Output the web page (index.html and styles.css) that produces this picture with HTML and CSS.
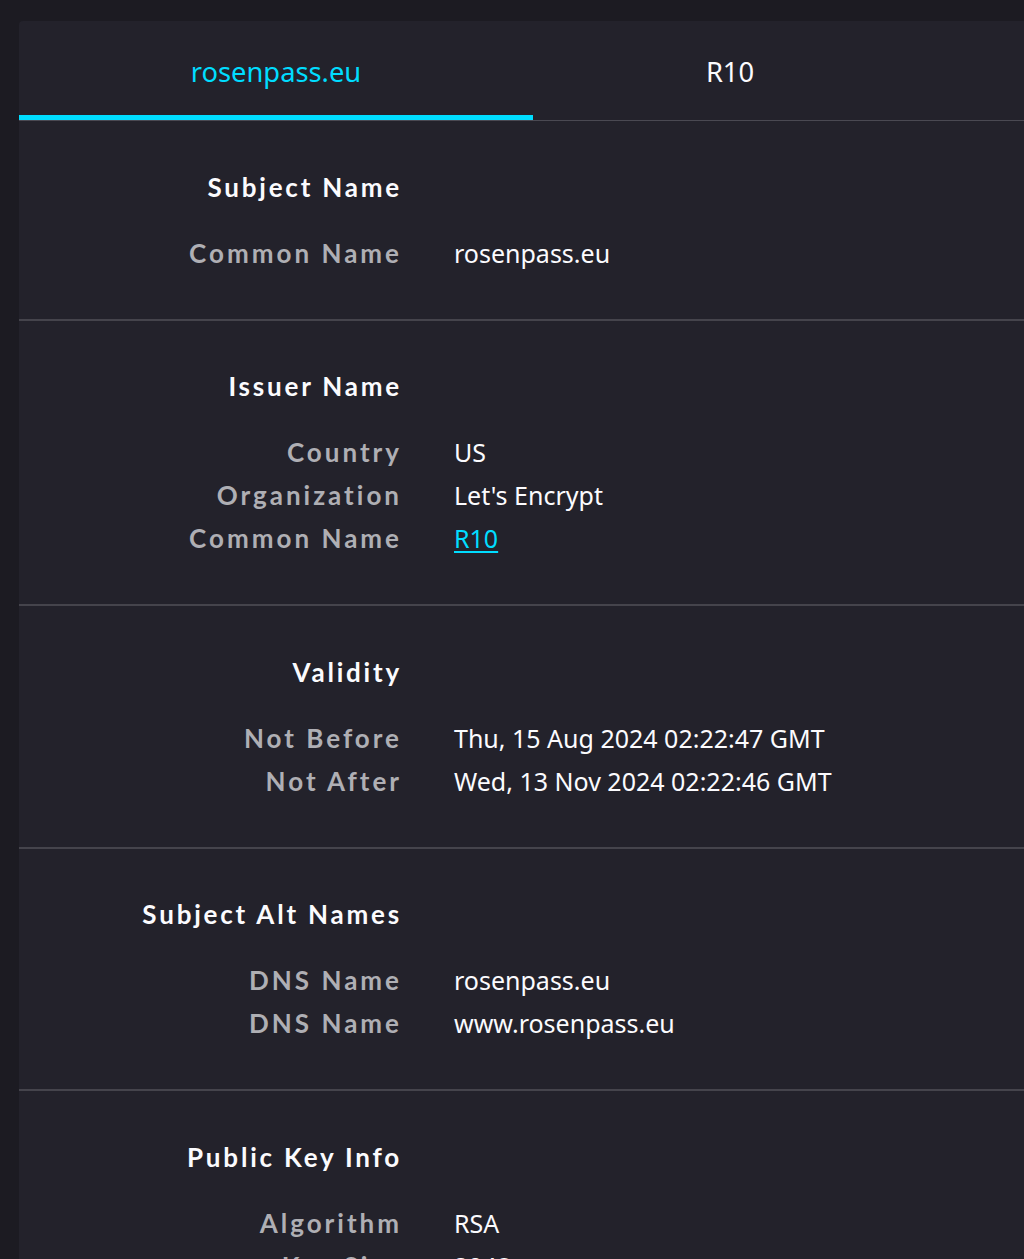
FILE: index.html
```html
<!DOCTYPE html>
<html lang="en">
<head>
<meta charset="utf-8">
<title>Certificate</title>
<link rel="stylesheet" href="styles.css">
</head>
<body>
<div class="card">
  <div class="tabs">
    <div class="tab tab-first active">rosenpass.eu</div>
    <div class="tab tab-second">R10</div>
  </div>

  <section class="section">
    <div class="row heading-row"><div class="heading">Subject Name</div></div>
    <div class="rows">
      <div class="row"><div class="label">Common Name</div><div class="value">rosenpass.eu</div></div>
    </div>
  </section>

  <section class="section">
    <div class="row heading-row"><div class="heading">Issuer Name</div></div>
    <div class="rows">
      <div class="row"><div class="label">Country</div><div class="value">US</div></div>
      <div class="row"><div class="label">Organization</div><div class="value">Let's Encrypt</div></div>
      <div class="row"><div class="label">Common Name</div><div class="value"><a class="link" href="#">R10</a></div></div>
    </div>
  </section>

  <section class="section">
    <div class="row heading-row"><div class="heading">Validity</div></div>
    <div class="rows">
      <div class="row"><div class="label">Not Before</div><div class="value date">Thu, 15 Aug 2024 02:22:47 GMT</div></div>
      <div class="row"><div class="label">Not After</div><div class="value date">Wed, 13 Nov 2024 02:22:46 GMT</div></div>
    </div>
  </section>

  <section class="section">
    <div class="row heading-row"><div class="heading">Subject Alt Names</div></div>
    <div class="rows">
      <div class="row"><div class="label">DNS Name</div><div class="value">rosenpass.eu</div></div>
      <div class="row"><div class="label">DNS Name</div><div class="value">www.rosenpass.eu</div></div>
    </div>
  </section>

  <section class="section">
    <div class="row heading-row"><div class="heading">Public Key Info</div></div>
    <div class="rows">
      <div class="row"><div class="label">Algorithm</div><div class="value">RSA</div></div>
      <div class="row"><div class="label">Key Size</div><div class="value">2048</div></div>
      <div class="row"><div class="label">Exponent</div><div class="value">65537</div></div>
    </div>
  </section>
</div>
</body>
</html>
```

FILE: styles.css
```css
html, body {
  margin: 0;
  padding: 0;
  background: #1c1b22;
  overflow: hidden;
}

body {
  padding: 21px 0 0 19px;
  font-family: "Noto Sans", sans-serif;
  color: #fbfbfe;
}

.card {
  width: 1100px;
  background: #23222b;
  border-radius: 4px;
}

.tabs {
  display: flex;
  border-bottom: 1px solid #4a4952;
}

.tab {
  height: 94px;
  line-height: 101px;
  text-align: center;
  font-size: 27.3px;
  color: #fbfbfe;
  border-bottom: 5px solid transparent;
}

.tab-first { flex: 0 0 514px; }
.tab-second { flex: 0 0 394px; }

.tab.active {
  color: #00ddff;
  border-bottom-color: #00ddff;
}

.section {
  padding: 44px 0 44.5px;
  border-bottom: 2px solid #45444c;
}

.rows {
  margin-top: 23px;
}

.row {
  display: flex;
  align-items: center;
  height: 43px;
}

.heading,
.label {
  flex: 0 0 383px;
  text-align: right;
  font-family: "Lato", sans-serif;
  font-size: 26px;
}

.heading {
  font-weight: 700;
  letter-spacing: 2.8px;
  color: #fbfbfe;
}

.label {
  font-weight: 700;
  letter-spacing: 3px;
  color: #afafb4;
}

.value {
  margin-left: 52px;
  font-size: 25px;
  color: #fbfbfe;
}

.link {
  color: #00ddff;
  text-decoration: underline;
  text-underline-offset: 3px;
}
```
